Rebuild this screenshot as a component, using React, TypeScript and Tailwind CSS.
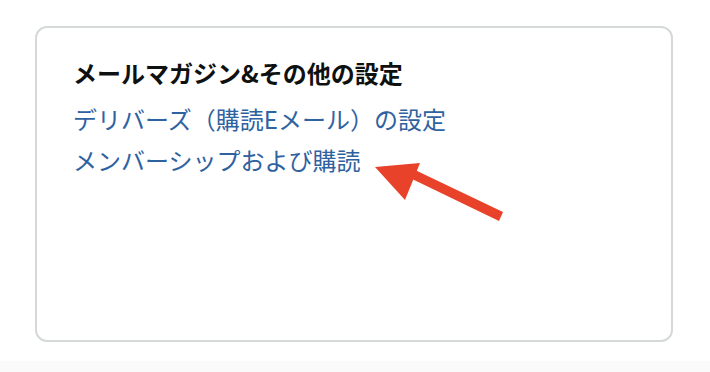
export default function App() {
  return (
    <div
      className="relative w-[710px] h-[372px] bg-white overflow-hidden"
      style={{ fontFamily: '"Noto Sans CJK JP", "Noto Sans", sans-serif' }}
    >
      <div className="pt-[26px] pl-[35px]">
        <div className="w-[638px] h-[316px] rounded-[12px] border-2 border-[#d5d9d9] bg-white pl-[36px] pt-[28px]">
          <h2 className="text-[24px] leading-[34px] font-bold text-[#0f1111]">
            メールマガジン&amp;その他の設定
          </h2>
          <ul className="mt-[12px] flex flex-col gap-[7px]">
            <li>
              <a className="text-[24px] leading-[34px] text-[#2f62a0]" href="#">
                デリバーズ（購読Eメール）の設定
              </a>
            </li>
            <li>
              <a className="text-[24px] leading-[34px] text-[#2f62a0]" href="#">
                メンバーシップおよび購読
              </a>
            </li>
          </ul>
        </div>
      </div>
      <div className="absolute left-0 right-0 bottom-0 h-[11px] bg-[#fafafa]" />

      {/* annotation arrow */}
      <svg className="absolute left-0 top-0" width="710" height="372" viewBox="0 0 710 372">
        <polygon points="375,167 420,163 405,200" fill="#e8432a" />
        <polygon points="410,178 415,170 503,212 499,221" fill="#e8432a" />
      </svg>
    </div>
  );
}
